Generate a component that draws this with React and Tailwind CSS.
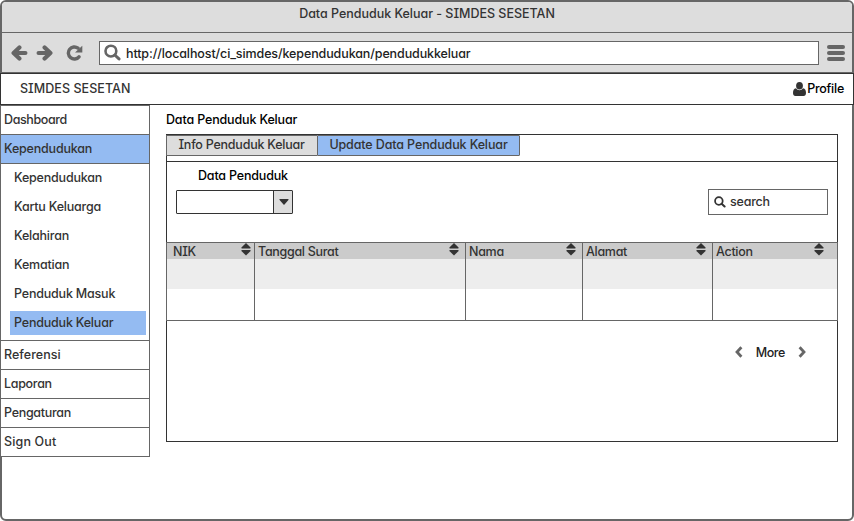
import React from "react";

const topItems = [
  { label: "Dashboard", active: false, track: "tracking-[-0.38px]" },
  { label: "Kependudukan", active: true, track: "tracking-[-0.2px]" },
];
const subItems = [
  { label: "Kependudukan" },
  { label: "Kartu Keluarga" },
  { label: "Kelahiran" },
  { label: "Kematian" },
  { label: "Penduduk Masuk" },
  { label: "Penduduk Keluar", active: true },
];
const bottomItems = [
  { label: "Referensi", track: "tracking-[0.05px]" },
  { label: "Laporan", track: "tracking-[-0.3px]" },
  { label: "Pengaturan", track: "tracking-[-0.3px]" },
  { label: "Sign Out", track: "tracking-[0.15px]" },
];
const columns = [
  { label: "NIK", cell: "w-[87px] pl-[6px] pr-[3px]" },
  { label: "Tanggal Surat", cell: "w-[210px] pl-[3px] pr-[6px]" },
  { label: "Nama", cell: "w-[116px] pl-[3px] pr-[6px]" },
  { label: "Alamat", cell: "w-[129px] pl-[3px] pr-[6px]" },
  { label: "Action", cell: "w-[124px] pl-[3px] pr-[13px]" },
];

function ArrowIcon({ className }) {
  return (
    <svg viewBox="0 0 17 16" className={`h-4 w-[17px] ${className || ""}`} fill="none" stroke="#666" strokeWidth="4.2">
      <path d="M8.4 2.4 L2.6 8 L8.4 13.6" strokeLinecap="round" strokeLinejoin="round" />
      <path d="M4 8 H14.4" strokeLinecap="round" />
    </svg>
  );
}

function ReloadIcon() {
  return (
    <svg viewBox="0 0 17 16" className="ml-[13px] h-4 w-[17px]">
      <path d="M13 11.8 A6 6 0 1 1 12 3.2" fill="none" stroke="#666" strokeWidth="3.4" strokeLinecap="round" />
      <path d="M16.3 0.8 V7.6 H9 Z" fill="#666" />
    </svg>
  );
}

function SearchIcon({ size, color, width }) {
  return (
    <svg viewBox="0 0 17 16" width={size} height={size} fill="none" stroke={color} strokeLinecap="round">
      <circle cx="6.9" cy="6.6" r="5.4" strokeWidth={width} />
      <path d="M10.8 10.5 L15 14.4" strokeWidth={width + 0.4} />
    </svg>
  );
}

function UserIcon() {
  return (
    <svg viewBox="0 0 13 14" className="h-[14px] w-[13px]" fill="#333">
      <ellipse cx="6.5" cy="3.8" rx="3.4" ry="3.8" />
      <path d="M3 6.3 C4.6 8.9 8.4 8.9 10 6.3 C12.2 6.6 13 8.6 13 11 C13 13 12 14 10.6 14 H2.4 C1 14 0 13 0 11 C0 8.6 0.8 6.6 3 6.3 Z" />
    </svg>
  );
}

function SortIcon() {
  return (
    <svg viewBox="0 0 10 13" className="h-[13px] w-[10px]" fill="#333">
      <path d="M5 0 L9.6 4.6 Q9.8 5.6 9 5.6 H1 Q0.2 5.6 0.4 4.6 Z" />
      <path d="M5 12.4 L9.6 8 Q9.8 7 9 7 H1 Q0.2 7 0.4 8 Z" />
    </svg>
  );
}

function Chevron({ className }) {
  return (
    <svg viewBox="0 0 8 12" className={`h-3 w-2 ${className || ""}`} fill="none" stroke="#666" strokeWidth="2.8">
      <path d="M6.4 1.2 L2 6 L6.4 10.8" />
    </svg>
  );
}

function Toolbar() {
  return (
    <div className="flex h-[40px] items-center border-b border-[#666] bg-[#ddd] pl-[9px] pr-[7px]">
      <ArrowIcon />
      <ArrowIcon className="ml-[8px] rotate-180" />
      <ReloadIcon />
      <div className="ml-4 flex h-6 flex-1 items-center border border-[#666] bg-white pl-1">
        <SearchIcon size={17} color="#666" width={2.6} />
        <span className="ml-[5px] pt-[2px] tracking-[-0.11px] text-[#222]">
          http://localhost/ci_simdes/kependudukan/pendudukkeluar
        </span>
      </div>
      <div className="ml-[8px] flex w-[18px] flex-col gap-[2px]">
        <div className="h-1 rounded-full bg-[#666]" />
        <div className="h-1 rounded-full bg-[#666]" />
        <div className="h-1 rounded-full bg-[#666]" />
      </div>
    </div>
  );
}

function Sidebar() {
  return (
    <nav className="-ml-0.5 h-[352px] w-[150px] shrink-0 border border-[#666] bg-white">
      {topItems.map((item) => (
        <div
          key={item.label}
          className={`flex h-[29px] items-center border-b border-[#666] pl-[3px] ${item.track} ${item.active ? "bg-[#94bbf2]" : ""}`}
        >
          {item.label}
        </div>
      ))}
      <div className="flex h-[177px] flex-col gap-[5px] border-b border-[#666] pl-[9px] pr-[3px] pt-[2px] tracking-[-0.2px]">
        {subItems.map((item) => (
          <div
            key={item.label}
            className={`flex h-6 shrink-0 items-center pl-1 ${item.active ? "bg-[#94bbf2]" : ""}`}
          >
            {item.label}
          </div>
        ))}
      </div>
      {bottomItems.map((item) => (
        <div
          key={item.label}
          className={`flex h-[29px] items-center border-b border-[#666] pl-[3px] last:h-[28px] last:border-b-0 ${item.track}`}
        >
          {item.label}
        </div>
      ))}
    </nav>
  );
}

function DataTable() {
  return (
    <div className="-mx-px mt-[27px] flex h-[79px] border border-[#666]">
      {columns.map((col) => (
        <div key={col.label} className="flex flex-col border-r border-[#666] last:border-r-0">
          <div className={`flex h-4 items-start justify-between bg-[#cbcbcb] ${col.cell}`}>
            <span className="pt-px tracking-[-0.3px]">{col.label}</span>
            <SortIcon />
          </div>
          <div className="h-[30px] bg-[#ededed]" />
        </div>
      ))}
    </div>
  );
}

function Panel() {
  return (
    <section className="h-[308px] w-[672px] border border-[#333]">
      <div className="h-[27px] border-b border-[#333]">
        <div className="-ml-px flex h-[21px]">
          <div className="flex w-[151px] items-center justify-center border-y border-l border-[#666] bg-[#ddd] pb-[2px] pr-px tracking-[-0.23px]">
            Info Penduduk Keluar
          </div>
          <div className="flex w-[203px] items-center justify-center rounded-r-[1px] border border-[#666] bg-[#94bbf2] pb-[2px] tracking-[-0.12px]">
            Update Data Penduduk Keluar
          </div>
        </div>
      </div>
      <div className="flex h-[53px] items-end justify-between pl-[9px] pr-[9px]">
        <div>
          <div className="mb-[6px] pl-[22px] leading-4 tracking-[-0.18px] text-black">Data Penduduk</div>
          <div className="mb-px flex h-6 w-[117px] rounded-[1px] border border-[#333]">
            <div className="flex-1" />
            <div className="flex w-[19px] items-center justify-center border-l border-[#333] bg-[#ddd]">
              <svg viewBox="0 0 10 6" className="ml-px h-[6px] w-[10px]" fill="#333">
                <path d="M0.8 0 H9.2 Q10 0.4 9.4 1 L5.5 5.6 Q5 6 4.5 5.6 L0.6 1 Q0 0.4 0.8 0 Z" />
              </svg>
            </div>
          </div>
        </div>
        <div className="flex h-[26px] w-[120px] items-center border border-[#666] pl-[5px]">
          <SearchIcon size={12} color="#333" width={2.5} />
          <span className="ml-1 pb-px tracking-[-0.2px]">search</span>
        </div>
      </div>
      <DataTable />
      <div className="mt-[23px] flex h-4 items-center justify-end pr-[31px]">
        <Chevron />
        <span className="mx-[13px] pt-[2px] tracking-[-0.4px] text-[#222]">More</span>
        <Chevron className="rotate-180" />
      </div>
    </section>
  );
}

export default function App() {
  return (
    <div className="h-[521px] w-[854px] bg-white font-['Inter','Liberation_Sans',sans-serif] text-[12.5px] font-medium leading-4 whitespace-nowrap text-[#333] [font-feature-settings:'cv11','cv08']">
      <div className="h-full w-full rounded-[6px] border-2 border-[#666]">
        <div className="flex h-[31px] items-start justify-center rounded-t-[4px] border-b border-[#666] bg-[#ddd] pt-[4px]">
          <span className="tracking-[-0.02px]">Data Penduduk Keluar - SIMDES SESETAN</span>
        </div>
        <Toolbar />
        <header className="-mx-0.5 flex h-8 items-center justify-between border border-[#333] bg-white pl-[19px] pr-[9px]">
          <span className="tracking-[0.05px]">SIMDES SESETAN</span>
          <div className="flex items-center gap-px">
            <UserIcon />
            <span className="tracking-[-0.25px] text-black">Profile</span>
          </div>
        </header>
        <div className="flex">
          <Sidebar />
          <main className="ml-4">
            <h1 className="h-[29px] pt-[7px] tracking-[-0.15px] text-black">Data Penduduk Keluar</h1>
            <Panel />
          </main>
        </div>
      </div>
    </div>
  );
}
